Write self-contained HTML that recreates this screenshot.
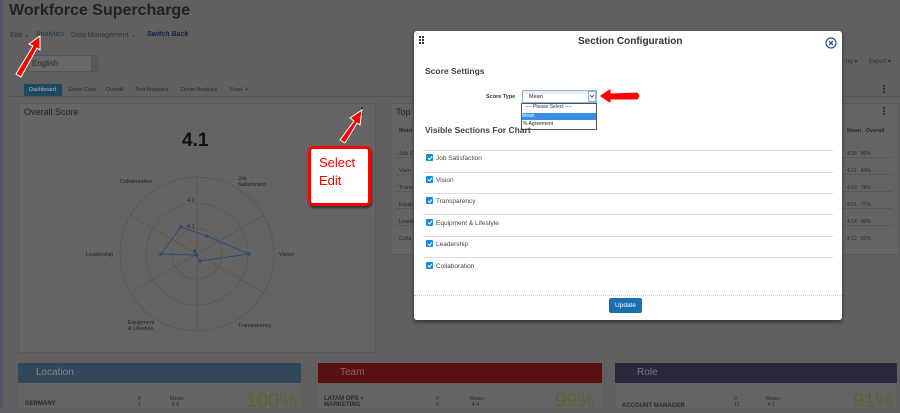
<!DOCTYPE html>
<html><head><meta charset="utf-8">
<style>
*{box-sizing:border-box;margin:0;padding:0}
body{width:900px;height:409px;overflow:hidden;background:#606060;font-family:"Liberation Sans",sans-serif;position:relative}
.a{position:absolute}
.t{font-size:7px;color:#2a2a2a}
.panel{position:absolute;background:#646464;border:1px solid #585858}
.cb{display:inline-block;width:7px;height:7px;background:#1a8ce0;border-radius:1px;vertical-align:-1px;margin-right:3px}
</style></head><body>
<div class="a" style="left:0;top:0;width:3px;height:409px;background:#556"></div>
<div class="a" style="left:9px;top:2px;font-size:16px;font-weight:bold;color:#222">Workforce Supercharge</div>
<div class="a t" style="left:10px;top:31px;color:#333">Edit ⌄</div>
<div class="a t" style="left:36px;top:31px;color:#234">Analytics</div>
<div class="a t" style="left:71px;top:31px;color:#333">Data Management ⌄</div>
<div class="a t" style="left:147px;top:31px;color:#1a2040;font-weight:bold;font-style:italic">Switch Back</div>
<div class="a" style="left:28px;top:55px;width:71px;height:17px;background:#686868;border:1px solid #555"></div>
<div class="a t" style="left:32px;top:59px;font-size:8px">English</div>
<div class="a" style="left:91px;top:56px;width:8px;height:15px;background:#585858"></div>
<div class="a" style="left:24px;top:84px;width:38px;height:12px;background:#1e4a60"></div>
<div class="a t" style="left:29px;top:87px;font-size:5.5px;color:#bbb">Dashboard</div>
<div class="a t" style="left:68px;top:87px;font-size:5.5px">Score Card</div>
<div class="a t" style="left:106px;top:87px;font-size:5.5px">Overall</div>
<div class="a t" style="left:135px;top:87px;font-size:5.5px">Text Analytics</div>
<div class="a t" style="left:181px;top:87px;font-size:5.5px">Driver Analysis</div>
<div class="a t" style="left:230px;top:87px;font-size:5.5px">Final &nbsp;<b>+</b></div>
<div class="a" style="left:10px;top:96px;width:890px;height:1px;background:#4a5560"></div>
<div class="a t" style="left:846px;top:58px;font-size:6px;color:#234">ng ▾ &nbsp;&nbsp;&nbsp;&nbsp;&nbsp;&nbsp;Export ▾</div>
<div class="a" style="left:883px;top:85px;width:2px;height:8px;border-left:2px dotted #333"></div>

<div class="panel" style="left:18px;top:103px;width:358px;height:250px"></div>
<div class="a" style="left:24px;top:107px;font-size:9px;color:#222">Overall Score</div>
<div class="a" style="left:361px;top:107px;width:2px;height:8px;border-left:2px dotted #333"></div>
<div class="a" style="left:182px;top:130px;font-size:19px;font-weight:bold;color:#111">4.1</div>
<svg class="a" style="left:0;top:0" width="380" height="360">
<g fill="none" stroke="#555" stroke-width="0.7">
<circle cx="197" cy="254" r="77"/><circle cx="197" cy="254" r="51"/><circle cx="197" cy="254" r="25"/>
<line x1="197" y1="177" x2="197" y2="331"/>
<line x1="130" y1="215" x2="264" y2="293"/>
<line x1="130" y1="293" x2="264" y2="215"/>
</g>
<polygon points="207,236 249,254 200,261 196,255 161,254 181,227" fill="none" stroke="#2e4a70" stroke-width="1"/>
<g fill="#2e4a70"><circle cx="207" cy="236" r="1.8"/><circle cx="249" cy="254" r="1.8"/><circle cx="200" cy="261" r="1.8"/><circle cx="196" cy="255" r="1.8"/><circle cx="161" cy="254" r="1.8"/><circle cx="181" cy="227" r="1.8"/></g>
<g font-family="Liberation Sans" font-size="5.5" fill="#222">
<text x="120" y="183">Collaboration</text><text x="238" y="180">Job</text><text x="238" y="186">Satisfaction</text>
<text x="187" y="202">4.2</text><text x="187" y="228">4.1</text><text x="193" y="253">4</text>
<text x="86" y="256">Leadership</text><text x="279" y="256">Vision</text>
<text x="128" y="324">Equipment</text><text x="128" y="330">&amp; Lifestyle</text><text x="238" y="327">Transparency</text>
</g>
</svg>

<div class="panel" style="left:390px;top:103px;width:510px;height:152px"></div>
<div class="a" style="left:396px;top:107px;font-size:9px;color:#222">Top</div>
<div class="a" style="left:883px;top:107px;width:2px;height:8px;border-left:2px dotted #333"></div>
<div class="a t" style="left:399px;top:128px;font-size:5.5px;font-weight:bold">Metri</div>
<div class="a t" style="left:847px;top:128px;font-size:5.5px;font-weight:bold">Mean &nbsp;&nbsp;Overall</div>
<div class="a" style="left:396px;top:141px;width:496px;height:90px;background:repeating-linear-gradient(#646464 0 16px,#585858 16px 17px)"></div>
<div class="a t" style="left:399px;top:146px;font-size:5.5px;line-height:17px">Job S<br>Visio<br>Trans<br>Equip<br>Leade<br>Colla</div>
<div class="a t" style="left:847px;top:146px;font-size:5px;line-height:17px">4.08 &nbsp;&nbsp;80%<br>4.21 &nbsp;&nbsp;84%<br>4.03 &nbsp;&nbsp;78%<br>4.01 &nbsp;&nbsp;77%<br>4.14 &nbsp;&nbsp;80%<br>4.12 &nbsp;&nbsp;82%</div>

<div class="a" style="left:18px;top:363px;width:283px;height:20px;background:#33475a"></div>
<div class="a" style="left:36px;top:367px;font-size:10px;color:#7a8a96">Location</div>
<div class="a" style="left:318px;top:363px;width:284px;height:20px;background:#581010"></div>
<div class="a" style="left:340px;top:367px;font-size:10px;color:#9a6666">Team</div>
<div class="a" style="left:615px;top:363px;width:282px;height:20px;background:#28283a"></div>
<div class="a" style="left:637px;top:367px;font-size:10px;color:#777a88">Role</div>
<div class="a" style="left:18px;top:383px;width:283px;height:26px;background:#646464"></div>
<div class="a" style="left:318px;top:383px;width:284px;height:26px;background:#646464"></div>
<div class="a" style="left:615px;top:383px;width:282px;height:26px;background:#646464"></div>
<div class="a t" style="left:25px;top:401px;font-size:6px;font-weight:bold">GERMANY</div>
<div class="a t" style="left:138px;top:396px;font-size:5.5px">#<br>1</div><div class="a t" style="left:170px;top:396px;font-size:5.5px">Mean<br>&nbsp;4.8</div>
<div class="a" style="left:246px;top:390px;font-size:20px;color:#4f6b2a">100%</div>
<div class="a t" style="left:324px;top:396px;font-size:6px;font-weight:bold">LATAM OPS +<br>MARKETING</div>
<div class="a t" style="left:436px;top:396px;font-size:5.5px">#<br>6</div><div class="a t" style="left:470px;top:396px;font-size:5.5px">Mean<br>&nbsp;4.4</div>
<div class="a" style="left:555px;top:390px;font-size:20px;color:#4f6b2a">99%</div>
<div class="a t" style="left:622px;top:403px;font-size:6px;font-weight:bold">ACCOUNT MANAGER</div>
<div class="a t" style="left:734px;top:396px;font-size:5.5px">#<br>11</div><div class="a t" style="left:766px;top:396px;font-size:5.5px">Mean<br>&nbsp;4.1</div>
<div class="a" style="left:853px;top:390px;font-size:20px;color:#4f6b2a">91%</div>

<!-- modal -->
<div class="a" style="left:414px;top:31px;width:428px;height:289px;background:#fff;border-radius:3px;box-shadow:0 2px 4px rgba(0,0,0,.5)"></div>
<svg class="a" style="left:419px;top:36px" width="8" height="10"><g fill="#333"><rect x="0" y="0" width="2" height="2"/><rect x="3" y="0" width="2" height="2"/><rect x="0" y="3" width="2" height="2"/><rect x="3" y="3" width="2" height="2"/><rect x="0" y="6" width="2" height="2"/><rect x="3" y="6" width="2" height="2"/></g></svg>
<div class="a" style="left:578px;top:36px;font-size:10px;font-weight:bold;color:#333">Section Configuration</div>
<svg class="a" style="left:825px;top:37px" width="12" height="12"><circle cx="6" cy="6" r="5" fill="none" stroke="#2a5a9a" stroke-width="1.3"/><path d="M4,4 L8,8 M8,4 L4,8" stroke="#2a5a9a" stroke-width="1.4"/></svg>
<div class="a" style="left:425px;top:66px;font-size:8.5px;font-weight:bold;color:#444">Score Settings</div>
<div class="a" style="left:486px;top:94px;font-size:5.5px;color:#333;font-weight:bold">Score Type</div>
<div class="a" style="left:522px;top:90px;width:75px;height:13px;border:1px solid #8ab4e0;background:#fff"></div>
<div class="a" style="left:523px;top:91px;width:65px;height:3px;background:#eee"></div>
<div class="a" style="left:529px;top:94px;font-size:5.5px;color:#222">Mean</div>
<div class="a" style="left:588px;top:91px;width:8px;height:11px;border:1px solid #8ab4e0"></div>
<svg class="a" style="left:589px;top:94px" width="6" height="5"><path d="M1,1 L3,3 L5,1" fill="none" stroke="#333" stroke-width="0.8"/></svg>
<div class="a" style="left:521px;top:103px;width:76px;height:27px;border:1px solid #555;background:#fff"></div>
<div class="a" style="left:525px;top:104px;font-size:5px;color:#333">---- Please Select ----</div>
<div class="a" style="left:522px;top:113px;width:74px;height:7px;background:#3c8ee6;font-size:5px;color:#fff;line-height:7px">Mean</div>
<div class="a" style="left:523px;top:121px;font-size:5px;color:#222">% Agreement</div>
<div class="a" style="left:425px;top:125px;font-size:8.5px;font-weight:bold;color:#444">Visible Sections For Char<span style="letter-spacing:-2px">t</span></div>
<div class="a" style="left:423px;top:150px;width:410px;height:1px;background:#ddd"></div>
<div class="a" style="left:423px;top:172px;width:410px;height:1px;background:#ddd"></div>
<div class="a" style="left:423px;top:193px;width:410px;height:1px;background:#ddd"></div>
<div class="a" style="left:423px;top:214px;width:410px;height:1px;background:#ddd"></div>
<div class="a" style="left:423px;top:236px;width:410px;height:1px;background:#ddd"></div>
<div class="a" style="left:423px;top:257px;width:410px;height:1px;background:#ddd"></div>
<div class="a" style="left:426px;top:148px;font-size:6.5px;color:#444;line-height:21.5px">
<div><span class="cb"></span>Job Satisfaction</div>
<div><span class="cb"></span>Vision</div>
<div><span class="cb"></span>Transparency</div>
<div><span class="cb"></span>Equipment &amp; Lifestyle</div>
<div><span class="cb"></span>Leadership</div>
<div><span class="cb"></span>Collaboration</div>
</div>
<svg class="a" style="left:426px;top:150px" width="10" height="130"><g fill="none" stroke="#fff" stroke-width="1"><path d="M2,8 L3.5,9.5 L6,6.5"/><path d="M2,29.5 L3.5,31 L6,28"/><path d="M2,51 L3.5,52.5 L6,49.5"/><path d="M2,72.5 L3.5,74 L6,71"/><path d="M2,94 L3.5,95.5 L6,92.5"/><path d="M2,115.5 L3.5,117 L6,114"/></g></svg>
<div class="a" style="left:414px;top:295px;width:428px;height:0;border-top:1px dotted #ccc"></div>
<div class="a" style="left:609px;top:298px;width:33px;height:15px;background:#1a6fb0;border-radius:2px;font-size:6.5px;color:#fff;text-align:center;line-height:15px">Update</div>

<!-- annotations -->
<svg class="a" style="left:0;top:0" width="900" height="409">
<g fill="#f00" stroke="#fff" stroke-width="1">
<path d="M16,74 L33,46 L29,44 L40,36 L40,50 L37,48 L21,77 Z"/>
<path d="M340,140 L354,121 L350,118 L362,110 L360,125 L357,123 L345,143 Z"/>
<path d="M599,96 L611,88 L611,93 L638,92 L640,96 L638,100 L611,100 L611,104 Z"/>
</g>
</svg>
<div class="a" style="left:308px;top:146px;width:63px;height:60px;background:#fff;border:3px solid #f00;border-radius:5px;box-shadow:1px 2px 2px rgba(0,0,0,.5)"></div>
<div class="a" style="left:319px;top:154px;font-size:13px;color:#e00;line-height:18px">Select<br>Edit</div>
</body></html>
